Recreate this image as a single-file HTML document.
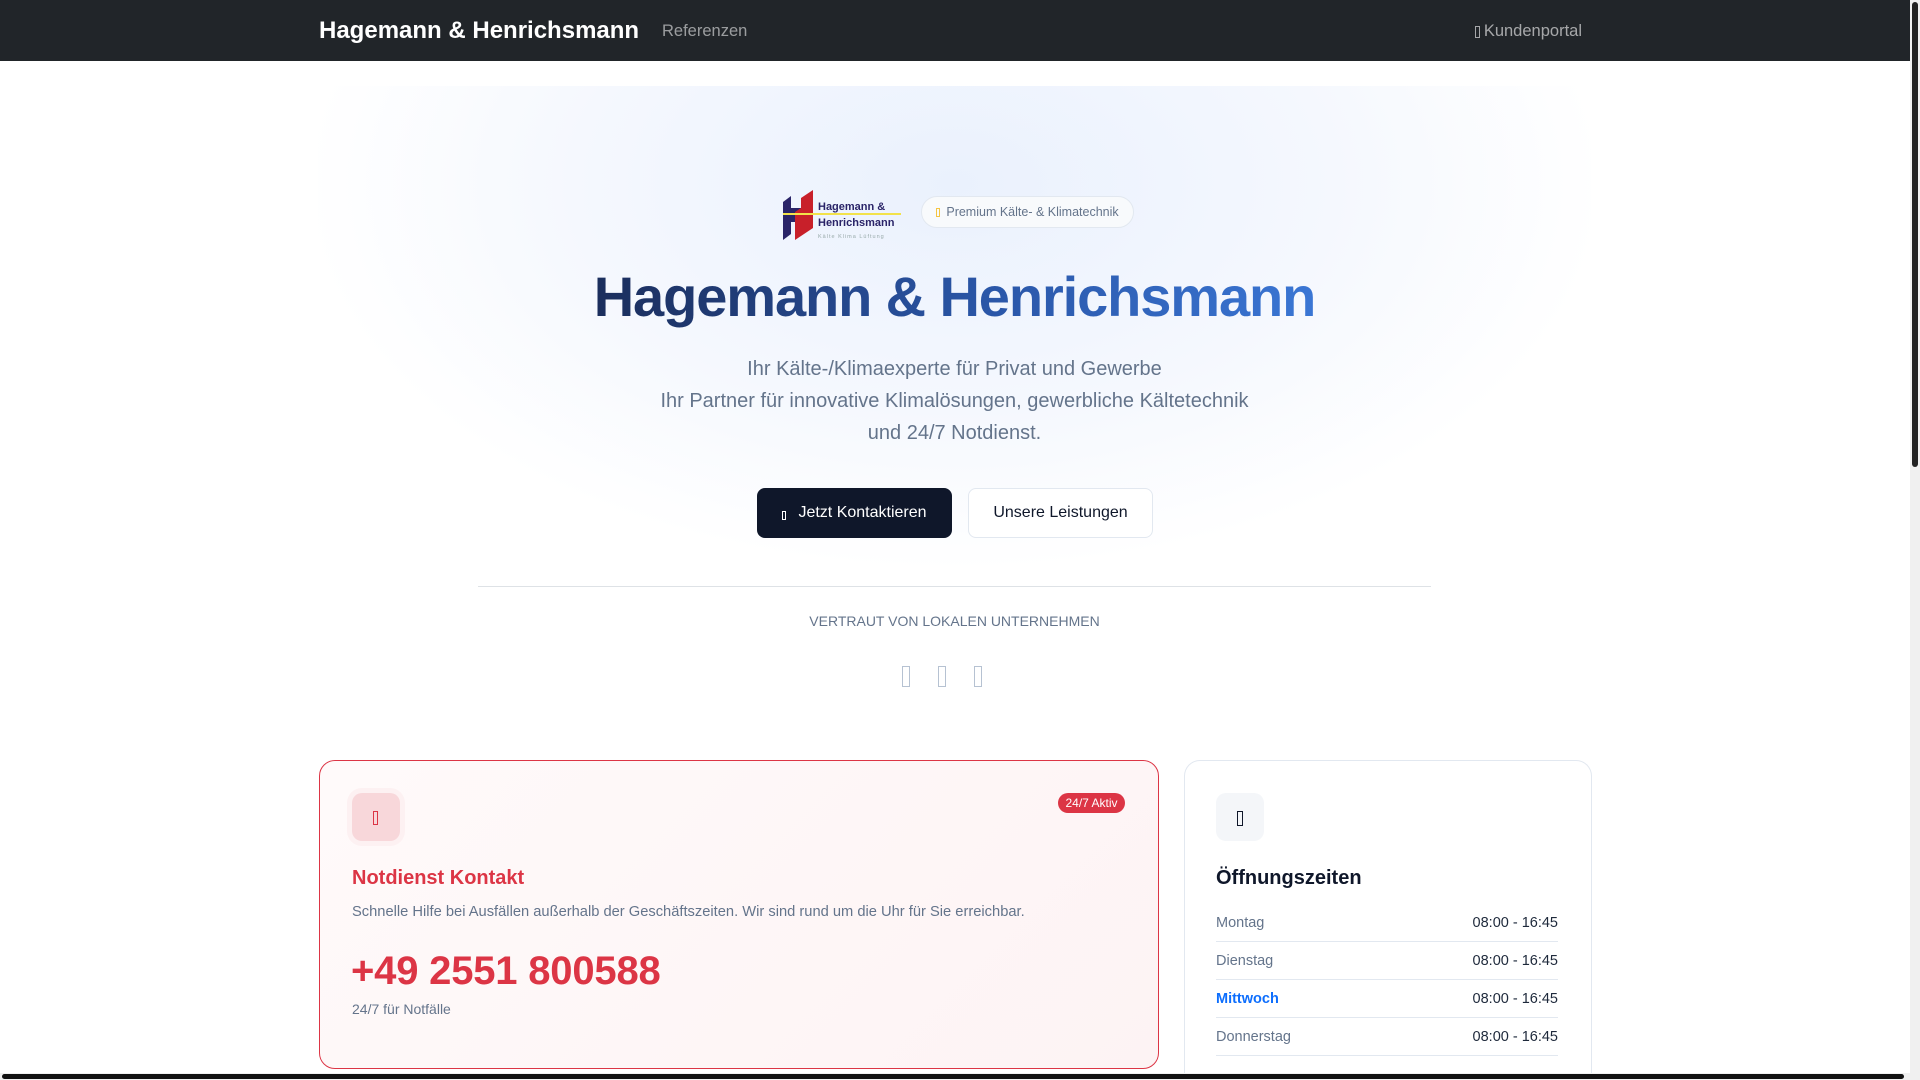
<!DOCTYPE html>
<html><head><meta charset="utf-8"><style>
*{box-sizing:border-box;margin:0;padding:0}
html,body{width:1920px;height:1080px;overflow:hidden}
body{background:#fff;font-family:"Liberation Sans",Arial,sans-serif;position:relative}
.a{position:absolute}
.tofu{display:inline-block;border:1.5px solid currentColor;vertical-align:middle}
.nav{left:0;top:0;width:1910px;height:61px;background:#212529}
.hero{left:318px;top:86px;width:1273px;height:650px;background:radial-gradient(ellipse 60% 70% at 50% 15%,#eaf1fd 0%,#f5f8fe 50%,#fff 85%)}
.c{text-align:center;left:318px;width:1273px}
.row{left:1216px;width:342px;height:38px;border-bottom:1.5px solid #e2e8f0;font-size:14.5px;display:flex;justify-content:space-between;align-items:center;color:#64748b}
.row span:last-child{color:#1e293b}
</style></head><body>
<div class="a nav"></div>
<div class="a" style="left:319px;top:16px;color:#fff;font-size:24px;font-weight:bold;line-height:30px">Hagemann &amp; Henrichsmann</div>
<div class="a" style="left:662px;top:20px;color:rgba(255,255,255,.55);font-size:16.5px;line-height:22px">Referenzen</div>
<div class="a" style="left:1382px;top:20px;width:200px;text-align:right;color:rgba(255,255,255,.6);font-size:16.5px;line-height:22px;white-space:nowrap"><span class="tofu" style="width:5px;height:12px;border-width:1px;margin-right:4px"></span>Kundenportal</div>

<div class="a hero"></div>
<svg class="a" style="left:781px;top:190px" width="120" height="52" viewBox="0 0 120 52">
<polygon points="2,12 10,6 10,44 2,50" fill="#2a2468"/>
<polygon points="10,18 20,18 20,32 10,32" fill="#2a2468"/>
<polygon points="20,8 32,0 32,38 20,46" fill="#c8202a"/>
<polygon points="14,22 20,18 20,46 14,50" fill="#c8202a"/>
<rect x="2" y="23" width="118" height="2" fill="#f2e24a"/>
<text x="37" y="20" font-size="11" font-weight="bold" fill="#2a2468" font-family="Liberation Sans">Hagemann &amp;</text>
<text x="37" y="36" font-size="11" font-weight="bold" fill="#2a2468" font-family="Liberation Sans">Henrichsmann</text>
<text x="37" y="48" font-size="5.5" fill="#9aa" font-family="Liberation Sans" letter-spacing="1">Kälte Klima Lüftung</text>
</svg>
<div class="a" style="left:921px;top:196px;width:213px;height:32px;border:1px solid #e2e8f0;border-radius:16px;background:#f8fafc;font-size:12.5px;color:#64748b;line-height:30px;text-align:center"><span class="tofu" style="width:4px;height:9px;border-width:1px;color:#f5c542;margin-right:6px"></span>Premium Kälte- &amp; Klimatechnik</div>

<div class="a c" style="top:262px;font-size:56px;font-weight:bold;line-height:70px;letter-spacing:-1.1px"><span style="background:linear-gradient(90deg,#1b2e5c,#2a56a8 55%,#3a76d4);-webkit-background-clip:text;background-clip:text;color:transparent">Hagemann &amp; Henrichsmann</span></div>
<div class="a c" style="top:353px;font-size:20px;line-height:32px;color:#64748b">Ihr Kälte-/Klimaexperte für Privat und Gewerbe<br>Ihr Partner für innovative Klimalösungen, gewerbliche Kältetechnik<br>und 24/7 Notdienst.</div>

<div class="a" style="left:757px;top:488px;width:195px;height:50px;background:#0f172a;border-radius:8px;color:#fff;font-size:16px;line-height:50px;text-align:center"><span class="tofu" style="width:4px;height:9px;border-width:1px;margin-right:12px;position:relative;top:3px"></span>Jetzt Kontaktieren</div>
<div class="a" style="left:968px;top:488px;width:185px;height:50px;background:#fff;border:1px solid #e2e8f0;border-radius:8px;color:#0f172a;font-size:16px;line-height:48px;text-align:center">Unsere Leistungen</div>

<div class="a" style="left:478px;top:586px;width:953px;height:1px;background:#dee2e6"></div>
<div class="a c" style="top:612px;font-size:14px;color:#64748b;line-height:18px">VERTRAUT VON LOKALEN UNTERNEHMEN</div>
<div class="a" style="left:902px;top:666px;width:8px;height:21px;border:1.5px solid #b6c2d2"></div>
<div class="a" style="left:938px;top:666px;width:8px;height:21px;border:1.5px solid #b6c2d2"></div>
<div class="a" style="left:974px;top:666px;width:8px;height:21px;border:1.5px solid #b6c2d2"></div>

<div class="a" style="left:319px;top:760px;width:840px;height:309px;border:1.5px solid #dc3545;border-radius:16px;background:linear-gradient(135deg,#fffafa,#fdf3f4)"></div>
<div class="a" style="left:352px;top:793px;width:48px;height:48px;border-radius:10px;background:#f8d7da;box-shadow:0 0 0 5px #fdf1f2"></div>
<div class="a" style="left:373px;top:811px;width:5px;height:14px;border:1px solid #dc3545"></div>
<div class="a" style="left:1058px;top:793px;width:67px;height:20px;border-radius:10px;background:#dc3545;color:#fff;font-size:12px;line-height:20px;text-align:center">24/7 Aktiv</div>
<div class="a" style="left:352px;top:865px;font-size:20px;font-weight:bold;color:#dc3545;line-height:26px">Notdienst Kontakt</div>
<div class="a" style="left:352px;top:902px;font-size:14.7px;color:#64748b;line-height:20px">Schnelle Hilfe bei Ausfällen außerhalb der Geschäftszeiten. Wir sind rund um die Uhr für Sie erreichbar.</div>
<div class="a" style="left:351px;top:947px;font-size:40px;font-weight:bold;color:#dc3545;line-height:48px;letter-spacing:-.2px">+49 2551 800588</div>
<div class="a" style="left:352px;top:1000px;font-size:14px;color:#64748b;line-height:18px">24/7 für Notfälle</div>

<div class="a" style="left:1184px;top:760px;width:408px;height:320px;border:1.5px solid #e2e8f0;border-bottom:none;border-radius:16px 16px 0 0;background:#fff"></div>
<div class="a" style="left:1216px;top:793px;width:48px;height:48px;border-radius:10px;background:#f4f6f9"></div>
<div class="a" style="left:1237px;top:811px;width:6px;height:15px;border:1.5px solid #0f172a"></div>
<div class="a" style="left:1216px;top:865px;font-size:20px;font-weight:bold;color:#0f172a;line-height:26px">Öffnungszeiten</div>
<div class="a row" style="top:904px"><span>Montag</span><span>08:00 - 16:45</span></div>
<div class="a row" style="top:942px"><span>Dienstag</span><span>08:00 - 16:45</span></div>
<div class="a row" style="top:980px"><span style="color:#0d6efd;font-weight:bold">Mittwoch</span><span>08:00 - 16:45</span></div>
<div class="a row" style="top:1018px"><span>Donnerstag</span><span>08:00 - 16:45</span></div>

<div class="a" style="left:1910px;top:0;width:10px;height:1080px;background:#f0f0f0"></div>
<div class="a" style="left:1912px;top:2px;width:6px;height:465px;background:#222;border-radius:3px"></div>
<div class="a" style="left:0;top:1073px;width:1910px;height:7px;background:#f0f0f0"></div>
<div class="a" style="left:2px;top:1074px;width:1902px;height:5px;background:#111;border-radius:3px"></div>
</body></html>
